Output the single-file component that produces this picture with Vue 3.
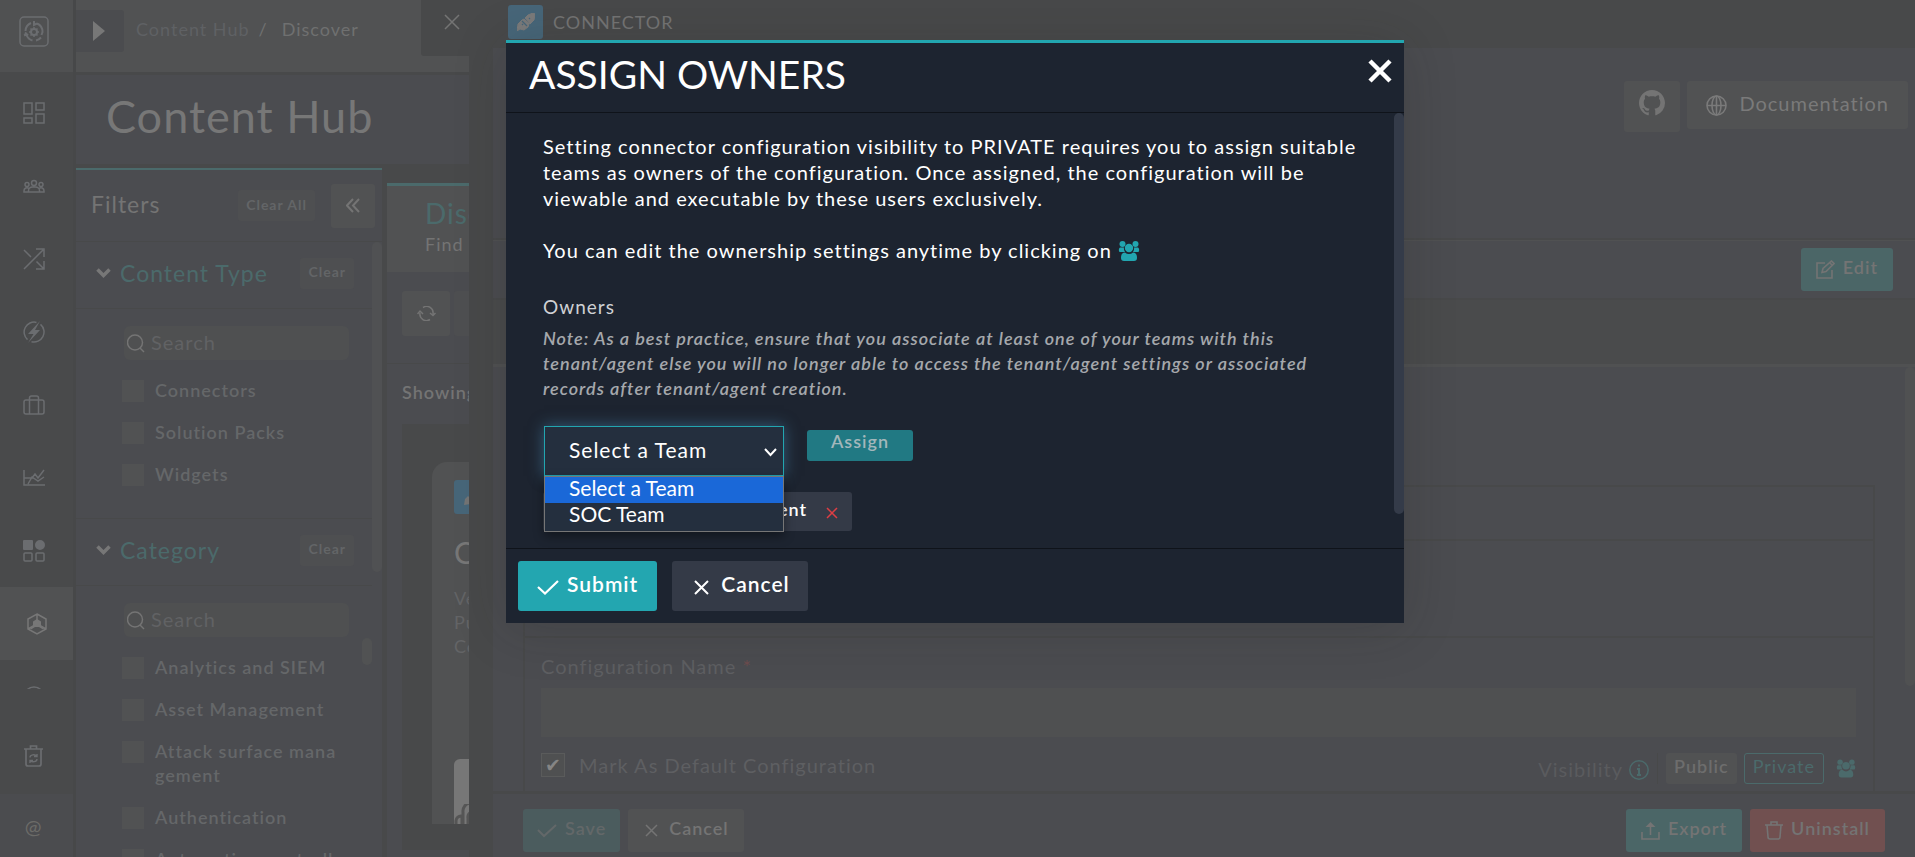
<script setup>
import { ref } from 'vue'

const navItems = [
  { name: 'Dashboard', stroke: 'M1 1h8v11H1zM13 1h8v7h-8zM1 16h8v5H1zM13 12h8v9h-8z' },
  { name: 'Teams', stroke: 'M8.5 8a2.5 2.5 0 1 0 5 0a2.5 2.5 0 1 0-5 0M2 9.500a2 2 0 1 0 4 0a2 2 0 1 0-4 0M16 9.500a2 2 0 1 0 4 0a2 2 0 1 0-4 0M5.500 17v-1.500a4 3.500 0 0 1 4-3.500h3a4 3.500 0 0 1 4 3.500v1.500zM5.500 17H1v-1a3 3 0 0 1 5-2.500M16.500 17H21v-1a3 3 0 0 0-5-2.500' },
  { name: 'Playbooks', stroke: 'M1 21L20 2M13 1h8v8M1 2l7 7M13.500 13.500l7 7M21 13v8h-8' },
  { name: 'Automation', stroke: 'M13.500 1.400A10 10 0 0 0 4.500 18.600M17.500 3.400A10 10 0 0 1 8.500 20.700', fill: 'M17 0L5 13h5.500L5 22l12-13h-5z' },
  { name: 'Resources', stroke: 'M3 6h16a2 2 0 0 1 2 2v10a2 2 0 0 1-2 2H3a2 2 0 0 1-2-2V8a2 2 0 0 1 2-2zM6.500 20V4a2 2 0 0 1 2-2h5a2 2 0 0 1 2 2v16' },
  { name: 'Reports', stroke: 'M1 3v15h21M1 11h8l3-4 3 4 6-8M5 17l4-7 6 4 6-4' },
  { name: 'Widgets', stroke: 'M2 13h6a1 1 0 0 1 1 1v6a1 1 0 0 1-1 1H2a1 1 0 0 1-1-1v-6a1 1 0 0 1 1-1zM14 13h6a1 1 0 0 1 1 1v6a1 1 0 0 1-1 1h-6a1 1 0 0 1-1-1v-6a1 1 0 0 1 1-1z', fill: 'M1 0h8a1 1 0 0 1 1 1v8a1 1 0 0 1-1 1H1a1 1 0 0 1-1-1V1a1 1 0 0 1 1-1zM12 5a5 5 0 1 0 10 0a5 5 0 1 0-10 0' },
  { name: 'Content Hub', active: true, stroke: 'M11 1l9 5v10l-9 5-9-5V6zM11 1v8M2 16l7-4M20 16l-7-4', fill: 'M11 6l4 2.500v5L18 15l-1 1.500-4-2.500h-4L5 16.500 4 15l3-1.500v-5z' },
  { name: 'Help', stroke: 'M1 11a10 10 0 1 0 20 0a10 10 0 1 0-20 0M7 8a4 4 0 0 1 8 0c0 3-4 3-4 6' },
]

const sections = [
  { title: 'Content Type', items: ['Connectors', 'Solution Packs', 'Widgets'] },
  {
    title: 'Category',
    scroll: true,
    items: ['Analytics and SIEM', 'Asset Management', 'Attack surface management', 'Authentication', 'Automation controllers'],
  },
]

const teams = ['Select a Team', 'SOC Team']
const team = ref('Select a Team')
const isDefault = ref(true)
</script>

<template>
  <div class="app">
    <nav class="sidebar" aria-label="Main">
      <a href="#" class="logo" aria-label="Home">
        <svg width="30" height="31" viewBox="0 0 30 31" fill="none" stroke="currentColor">
          <rect x="1" y="1" width="28" height="29" rx="4" stroke-width="1.500" />
          <path d="M12 7a9 9 0 0 0-5.500 8M15 5v4l3-1.500M18 7.500a9 9 0 0 1 5.500 8.500l-1 3M6 16.500l3 3M7.500 19a9 9 0 0 0 6 5.500M17 24.500a9 9 0 0 0 5-3M6.500 20l-1-2" stroke-width="2" />
          <circle cx="15" cy="16" r="3" stroke-width="2" />
          <path d="M15 11v2M15 19v2M10 16h2M18 16h2M11.500 12.500l1.500 1.500M17 18l1.500 1.500M18.500 12.500L17 14M13 18l-1.500 1.500" stroke-width="1.500" />
        </svg>
      </a>
      <div class="nav-list">
        <a v-for="item in navItems" :key="item.name" href="#" class="nav-item" :class="{ active: item.active }" :aria-label="item.name">
          <svg width="22" height="22" viewBox="0 0 22 22">
            <path :d="item.stroke" fill="none" stroke="currentColor" stroke-width="1.500" />
            <path v-if="item.fill" :d="item.fill" fill="currentColor" />
          </svg>
        </a>
      </div>
      <a href="#" class="nav-bin" aria-label="Recycle bin">
        <svg width="19" height="22" viewBox="0 0 19 22" fill="none" stroke="currentColor" stroke-width="1.700">
          <path d="M0 4h19M2 4v15a2 2 0 0 0 2 2h11a2 2 0 0 0 2-2V4M6.500 4V1h6v3" />
          <path d="M6 12.500c0-3 5-3.500 6.500-1.500M13 9v2.500h-3M13 14c0 3-5 3.500-6.500 1.500M6 18v-2.500h3" stroke-width="1.400" />
        </svg>
      </a>
      <a href="#" class="nav-at">@</a>
    </nav>

    <main class="hub">
      <header class="hub-bar">
        <button class="expand" aria-label="Expand menu">
          <svg width="12" height="20" viewBox="0 0 12 20"><path d="M0 0l12 10L0 20z" fill="currentColor" /></svg>
        </button>
        <div class="crumbs"><a href="#">Content Hub</a><span>/</span><span class="here">Discover</span></div>
        <button class="hub-close" aria-label="Close panel">
          <svg width="16" height="16" viewBox="0 0 16 16" stroke="currentColor" stroke-width="1.500"><path d="M1 1l14 14M15 1L1 15" /></svg>
        </button>
      </header>
      <h1 class="hub-title">Content Hub</h1>
      <div class="hub-body">
        <aside class="filters">
          <div class="filters-head">
            <h2>Filters</h2>
            <button class="mini">Clear All</button>
            <button class="collapse" aria-label="Collapse filters">
              <svg width="14" height="15" viewBox="0 0 14 15" fill="none" stroke="currentColor" stroke-width="2"><path d="M7 1L1 7.500 7 14M13 1L7 7.500 13 14" /></svg>
            </button>
          </div>
          <div class="filters-scroll">
            <div class="sections">
              <section v-for="s in sections" :key="s.title" class="section">
                <div class="section-head">
                  <svg width="15" height="10" viewBox="0 0 15 10" fill="none" stroke="currentColor" stroke-width="3.500"><path d="M1.500 1.500l6 6 6-6" /></svg>
                  <h3>{{ s.title }}</h3>
                  <button class="mini">Clear</button>
                </div>
                <div class="section-body">
                  <div class="section-main">
                    <label class="search">
                      <svg width="18" height="19" viewBox="0 0 18 19" fill="none" stroke="currentColor" stroke-width="1.500"><circle cx="8" cy="8.500" r="7.500" /><path d="M13 14l4 4" /></svg>
                      <input type="text" placeholder="Search" :aria-label="'Search ' + s.title" />
                    </label>
                    <label v-for="i in s.items" :key="i" class="check"><input type="checkbox" /><span>{{ i }}</span></label>
                  </div>
                  <i v-if="s.scroll" class="inner-thumb"></i>
                </div>
              </section>
            </div>
            <i class="filters-thumb"></i>
          </div>
        </aside>

        <section class="results">
          <div class="tab"><strong>Discover</strong><span>Find Content</span></div>
          <div class="tools">
            <button aria-label="Refresh">
              <svg width="19" height="15" viewBox="0 0 19 15" fill="none" stroke="currentColor" stroke-width="1.500"><path d="M6 1.500A6.500 6.500 0 0 1 16 8M13 7l3 2.500L18.500 7M13 13.500A6.500 6.500 0 0 1 3 7M.500 8L3 5l3 3" /></svg>
            </button>
            <button class="faint" aria-label="Sort"></button>
          </div>
          <div class="showing">Showing</div>
          <div class="grid">
            <article class="card">
              <span class="card-icon">
                <svg width="18" height="18" viewBox="0 0 18 18" fill="currentColor"><path d="M1 17l1-6 3-3 5 5-3 3zM6 7l4-4 6-2 1 1-2 6-4 4z" /></svg>
              </span>
              <h4>C</h4>
              <p>Ve<br />Pu<br />Co</p>
              <div class="thumb">
                <svg width="56" height="20" viewBox="0 0 56 20" fill="none" stroke="currentColor" stroke-width="3"><path d="M2 20v-3a5 5 0 0 1 6-5v8M9 20V8a8 8 0 0 1 16-2M14 20v-6a5 5 0 0 1 10-2" /></svg>
              </div>
            </article>
          </div>
        </section>
      </div>
    </main>

    <section class="drawer">
      <header class="drawer-bar">
        <span class="conn-icon">
          <svg width="18" height="18" viewBox="0 0 18 18">
            <path d="M0 18l1-7 4-4 2-1 5 5-1 3-4 3-4-1zM8 5l3-3 5-2 2 1-1 6-4 4z" fill="currentColor" stroke="currentColor" stroke-linejoin="round" />
            <path d="M5 8l5 5M5 11l1 1M12 5l1 1" stroke="#476679" stroke-width="1.200" fill="none" />
          </svg>
        </span>
        <span>CONNECTOR</span>
      </header>
      <div class="drawer-body">
        <div class="drawer-top">
          <button class="btn github" aria-label="GitHub">
            <svg width="26" height="26" viewBox="0 0 16 16" fill="currentColor"><path d="M8 0C3.580 0 0 3.580 0 8c0 3.540 2.290 6.530 5.470 7.590.4.070.55-.17.55-.38 0-.19-.01-.82-.01-1.490-2.010.37-2.530-.49-2.690-.94-.09-.23-.48-.94-.82-1.130-.28-.15-.68-.52-.01-.53.63-.01 1.080.58 1.230.82.72 1.210 1.870.87 2.330.66.07-.52.28-.87.51-1.070-1.780-.2-3.640-.89-3.640-3.950 0-.87.31-1.590.82-2.150-.08-.2-.36-1.020.08-2.120 0 0 .67-.21 2.200.82.64-.18 1.320-.27 2-.27s1.360.09 2 .27c1.530-1.040 2.200-.82 2.200-.82.44 1.100.16 1.920.08 2.120.51.56.82 1.270.82 2.150 0 3.070-1.870 3.750-3.650 3.950.29.25.54.73.54 1.480 0 1.070-.01 1.930-.01 2.200 0 .21.15.46.55.38A8.010 8.010 0 0 0 16 8c0-4.420-3.580-8-8-8z" /></svg>
          </button>
          <button class="btn docs">
            <svg width="21" height="21" viewBox="0 0 21 21" fill="none" stroke="currentColor" stroke-width="1.600"><circle cx="10.500" cy="10.500" r="9.500" /><ellipse cx="10.500" cy="10.500" rx="4.500" ry="9.500" /><path d="M10.500 1v19M1 10.500h19" /></svg>
            <span>Documentation</span>
          </button>
        </div>
        <div class="drawer-edit">
          <button class="btn teal">
            <svg width="19" height="19" viewBox="0 0 19 19" fill="none" stroke="currentColor" stroke-width="1.600"><path d="M9 3H1v15h15v-8" /><path d="M6 12.500l1-4L15.500 1l2.500 2.500L10 11.500zM14 3l2 2" /></svg>
            <span>Edit</span>
          </button>
        </div>
        <div class="band"></div>
        <div class="drawer-scroll">
          <form class="config" @submit.prevent>
            <div class="row-a"></div>
            <div class="row-b"></div>
            <div class="fields">
              <label class="field-label" for="cfg-name">Configuration Name <em>*</em></label>
              <input id="cfg-name" class="field" type="text" />
              <div class="opts">
                <label class="default"><input v-model="isDefault" type="checkbox" /><span>Mark As Default Configuration</span></label>
                <div class="visibility">
                  <span class="vis-label">Visibility</span>
                  <svg class="info" width="20" height="20" viewBox="0 0 20 20" fill="none" stroke="currentColor"><circle cx="10" cy="10" r="9.200" stroke-width="1.500" /><path d="M10 4.500v2M8 9h2v6M8 15h4" stroke-width="2" /></svg>
                  <i class="sep"></i>
                  <button type="button" class="vis">Public</button>
                  <button type="button" class="vis on">Private</button>
                  <svg class="team" width="20" height="19" viewBox="0 0 22 20" fill="currentColor"><circle cx="4.500" cy="3" r="3" /><circle cx="17.500" cy="3" r="3" /><circle cx="11" cy="7" r="4.200" /><path d="M2 6.500h4a6 6 0 0 0 1 4.500H1.500A1.500 2.500 0 0 1 2 6.500zM20 6.500h-4a6 6 0 0 1-1 4.500h5.500A1.500 2.500 0 0 0 20 6.500zM7 11.500a6 6 0 0 0 8 0c3 0 4 2.500 4 5.500 0 2-1 3-3 3H6c-2 0-3-1-3-3 0-3 1-5.500 4-5.500z" /></svg>
                </div>
              </div>
            </div>
          </form>
          <i class="drawer-thumb"></i>
        </div>
        <footer class="drawer-foot">
          <button class="btn save">
            <svg width="20" height="14" viewBox="0 0 20 14" fill="none" stroke="currentColor" stroke-width="2"><path d="M1 6l6 6L19 1" /></svg>
            <span>Save</span>
          </button>
          <button class="btn plain">
            <svg width="13" height="13" viewBox="0 0 13 13" stroke="currentColor" stroke-width="1.500"><path d="M1 1l11 11M12 1L1 12" /></svg>
            <span>Cancel</span>
          </button>
          <button class="btn export">
            <svg width="19" height="19" viewBox="0 0 19 19" fill="none" stroke="currentColor" stroke-width="1.600"><path d="M1 11v7h17v-7M9.500 14V3" /><path d="M4.500 6l5-5 5 5z" fill="currentColor" stroke="none" /></svg>
            <span>Export</span>
          </button>
          <button class="btn remove">
            <svg width="18" height="19" viewBox="0 0 18 19" fill="none" stroke="currentColor" stroke-width="1.600"><path d="M0 4h18M2 4l1 12a2 2 0 0 0 2 2h8a2 2 0 0 0 2-2l1-12M6 4V1h6v3" /></svg>
            <span>Uninstall</span>
          </button>
        </footer>
      </div>
    </section>

    <div class="overlay">
      <div class="modal" role="dialog" aria-modal="true" aria-labelledby="modal-title">
        <header class="modal-head">
          <h2 id="modal-title">ASSIGN OWNERS</h2>
          <button class="modal-close" aria-label="Close">
            <svg width="24" height="24" viewBox="0 0 24 24" stroke="currentColor" stroke-width="4.500"><path d="M2 2l20 20M22 2L2 22" /></svg>
          </button>
        </header>
        <div class="modal-body">
          <div class="modal-content">
            <p>Setting connector configuration visibility to PRIVATE requires you to assign suitable teams as owners of the configuration. Once assigned, the configuration will be viewable and executable by these users exclusively.</p>
            <p class="second">
              You can edit the ownership settings anytime by clicking on
              <svg class="team" width="22" height="20" viewBox="0 0 22 20" fill="currentColor"><circle cx="4.500" cy="3" r="3" /><circle cx="17.500" cy="3" r="3" /><circle cx="11" cy="7" r="4.200" /><path d="M2 6.500h4a6 6 0 0 0 1 4.500H1.500A1.500 2.500 0 0 1 2 6.500zM20 6.500h-4a6 6 0 0 1-1 4.500h5.500A1.500 2.500 0 0 0 20 6.500zM7 11.500a6 6 0 0 0 8 0c3 0 4 2.500 4 5.500 0 2-1 3-3 3H6c-2 0-3-1-3-3 0-3 1-5.500 4-5.500z" /></svg>
            </p>
            <label class="owners" for="team">Owners</label>
            <p class="note">Note: As a best practice, ensure that you associate at least one of your teams with this tenant/agent else you will no longer able to access the tenant/agent settings or associated records after tenant/agent creation.</p>
            <div class="assign-row">
              <div class="picker">
                <select id="team" v-model="team"><option v-for="t in teams" :key="t">{{ t }}</option></select>
                <svg class="caret" width="13" height="9" viewBox="0 0 13 9" fill="none" stroke="currentColor" stroke-width="2"><path d="M1 1l5.500 6L12 1" /></svg>
                <ul class="menu" role="listbox" aria-label="Teams">
                  <li v-for="t in teams" :key="t" role="option" :class="{ on: t === team }" :aria-selected="t === team">{{ t }}</li>
                </ul>
              </div>
              <button class="assign">Assign</button>
            </div>
            <div class="chip">
              <span>Agent</span>
              <button aria-label="Remove team">
                <svg width="12" height="12" viewBox="0 0 12 12" stroke="currentColor" stroke-width="1.500"><path d="M1 1l10 10M11 1L1 11" /></svg>
              </button>
            </div>
          </div>
          <i class="modal-thumb"></i>
        </div>
        <footer class="modal-foot">
          <button class="mbtn submit">
            <svg width="22" height="15" viewBox="0 0 22 15" fill="none" stroke="currentColor" stroke-width="2.200"><path d="M1 7l7 6.500L21 1" /></svg>
            <span>Submit</span>
          </button>
          <button class="mbtn cancel">
            <svg width="15" height="15" viewBox="0 0 15 15" stroke="currentColor" stroke-width="2"><path d="M1 1l13 13M14 1L1 14" /></svg>
            <span>Cancel</span>
          </button>
        </footer>
      </div>
    </div>
  </div>
</template>

<style>
body { margin: 0; background: #48494a; }
</style>

<style scoped>
* { box-sizing: border-box; }
.app {
  display: flex;
  height: 100vh;
  overflow: hidden;
  position: relative;
  font-family: Lato, "Liberation Sans", sans-serif;
  font-size: 18px;
  line-height: 24px;
  letter-spacing: 1px;
  color: #747474;
  background: #48494a;
}
h1, h2, h3, h4, p, ul { margin: 0; padding: 0; font-weight: 400; }
button, input, select { font: inherit; letter-spacing: inherit; color: inherit; border: 0; margin: 0; padding: 0; background: none; }
a { color: inherit; text-decoration: none; }
svg { display: block; flex: none; }
i { display: block; }

.sidebar { flex: none; width: 76px; display: flex; flex-direction: column; border-right: 3px solid #474849; background: #494a4b; color: #6b6d70; }
.logo { height: 72px; flex: none; margin-bottom: 4px; background: #505152; display: flex; align-items: center; padding: 0 0 9px 19px; }
.nav-list { flex: 1; min-height: 0; overflow: hidden; }
.nav-item { height: 73px; padding-right: 6px; display: flex; align-items: center; justify-content: center; }
.nav-item.active { background: #515253; padding-right: 0; color: #777; }
.nav-bin { flex: none; height: 105px; padding: 56px 6px 0 0; display: flex; justify-content: center; align-items: flex-start; }
.nav-at { flex: none; height: 63px; background: #4b4c4f; display: flex; align-items: center; justify-content: center; padding: 0 6px 0 0; color: #6b6b68; font-size: 20px; }

.hub { flex: none; width: 393px; overflow: hidden; display: flex; flex-direction: column; }
.hub-bar { flex: none; height: 72px; margin-bottom: 3px; background: #515253; display: flex; align-items: flex-start; white-space: nowrap; }
.expand { width: 48px; height: 42px; margin-top: 10px; border-radius: 0 3px 3px 0; background: #4b4c4f; display: flex; align-items: center; padding-left: 17px; color: #777; }
.crumbs { flex: 1; display: flex; padding: 17px 0 0 12px; color: #6f7070; font-size: 18px; }
.crumbs a { color: #5f6164; }
.crumbs span { margin-left: 9px; }
.crumbs .here { margin-left: 14px; }
.hub-close { width: 48px; height: 56px; background: #48494a; border-radius: 0 0 0 3px; display: flex; justify-content: center; padding: 14px 0 0 14px; }
.hub-title { flex: none; height: 89px; background: #4b4c50; padding: 13px 0 0 30px; font-size: 45px; line-height: 56px; color: #777; }
.hub-body { flex: 1; min-height: 0; display: flex; }
.filters { flex: none; width: 306px; margin-top: 4px; border-top: 2px solid #4b6a6b; background: #4b4c50; display: flex; flex-direction: column; }
.filters-head { flex: none; height: 72px; border-bottom: 1px solid #48494a; display: flex; align-items: center; padding: 0 7px 0 15px; }
.filters-head h2 { flex: 1; font-size: 23px; padding-bottom: 3px; color: #747474; }
.mini { flex: none; font-size: 14px; font-weight: 700; line-height: 20px; height: 31px; padding: 0 8px 2px; border-radius: 3px; background: #4e4f51; color: #636567; }
.collapse { width: 44px; height: 44px; margin-left: 16px; border-radius: 3px; background: #515253; display: flex; align-items: center; justify-content: center; }
.filters-scroll { flex: 1; min-height: 0; display: flex; overflow: hidden; }
.sections { flex: 1; min-width: 0; }
.filters-thumb { flex: none; width: 10px; height: 330px; border-radius: 5px; background: #505153; }
.section-head { height: 67px; border-bottom: 1px solid #48494a; display: flex; align-items: center; gap: 9px; padding: 0 18px 4px 20px; color: #777; }
.section-head h3 { flex: 1; font-size: 23px; color: #4b6a6b; }
.section-body { display: flex; border-bottom: 1px solid #48494a; }
.section-main { flex: 1; min-width: 0; display: flex; flex-direction: column; gap: 18px; padding: 17px 0 32px 46px; }
.search { display: flex; align-items: center; gap: 6px; height: 34px; margin: 0 23px 0 2px; padding-left: 3px; border-radius: 6px; background: #4f5051; color: #747474; }
.search input { flex: 1; min-width: 0; font-size: 20px; outline: none; padding-bottom: 3px; }
.search input::placeholder { color: #616264; opacity: 1; }
.check { display: flex; align-items: flex-start; gap: 11px; color: #656769; font-weight: 600; word-break: break-all; padding-right: 30px; font-size: 18px; }
.check input { appearance: none; flex: none; width: 22px; height: 22px; margin-top: 2px; background: #515253; }
.inner-thumb { flex: none; width: 10px; height: 27px; margin: 52px 0 0 -10px; border-radius: 5px; background: #515253; }

.results { flex: 1; min-width: 0; margin: 19px 0 0 5px; overflow: hidden; background: #4b4c50; white-space: nowrap; }
.tab { height: 89px; border-top: 3px solid #4b6a6b; background: #515253; padding: 11px 0 0 38px; display: flex; flex-direction: column; gap: 3px; font-size: 18px; }
.tab strong { font-size: 28px; line-height: 32px; font-weight: 400; color: #4b6a6b; }
.tools { height: 92px; border-bottom: 1px solid #48494a; padding: 19px 0 0 15px; display: flex; gap: 4px; }
.tools button { flex: none; width: 48px; height: 45px; border-radius: 3px; background: #515253; display: flex; align-items: center; justify-content: center; }
.tools .faint { background: #4e4f51; }
.showing { height: 60px; padding: 16px 0 0 15px; font-size: 18px; font-weight: 600; }
.grid { height: 426px; margin-left: 15px; padding: 38px 0 0 30px; background: #48494a; }
.card { width: 360px; height: 362px; overflow: hidden; border-radius: 15px 15px 0 0; background: #515253; padding: 18px 22px 0; }
.card-icon { display: flex; align-items: center; justify-content: center; width: 35px; height: 34px; border-radius: 3px; background: #476679; }
.card h4 { font-size: 30px; line-height: 40px; margin-top: 18px; color: #777; }
.card p { margin-top: 14px; color: #636466; }
.thumb { width: 120px; height: 65px; margin-top: 101px; border-radius: 6px 6px 0 0; background: #777; color: #555; display: flex; align-items: flex-end; }

.drawer { flex: 1; min-width: 0; display: flex; flex-direction: column; padding-left: 24px; }
.drawer-bar { flex: none; height: 48px; display: flex; align-items: center; gap: 10px; padding: 0 0 4px 15px; }
.conn-icon { width: 35px; height: 34px; border-radius: 3px; background: #476679; display: flex; align-items: center; justify-content: center; color: #7b7b7b; }
.drawer-body { flex: 1; min-height: 0; background: #4b4c50; display: flex; flex-direction: column; }
.drawer-top { flex: none; height: 192px; border-bottom: 2px solid #48494a; display: flex; justify-content: flex-end; align-items: flex-start; gap: 7px; padding: 33px 7px 0 0; font-size: 20px; }
.btn { flex: none; display: flex; align-items: center; justify-content: center; gap: 8px; height: 43px; border-radius: 3px; padding: 0 15px; background: #515253; color: #747474; font-weight: 600; font-size: 18px; }
.btn span { padding-bottom: 5px; }
.github { width: 56px; height: 51px; padding: 0 0 7px; }
.docs { height: 48px; padding: 0 19px; gap: 12px; font-size: 20px; font-weight: 400; color: #7a7a7a; }
.drawer-edit { flex: none; height: 58px; border-top: 1px solid #505152; display: flex; justify-content: flex-end; padding: 7px 22px 0 0; }
.teal { background: #4b6667; }
.band { flex: none; height: 69px; background: #4a4b4c; border-bottom: 3px solid #505152; border-top: 2px solid #48494a; }
.drawer-scroll { flex: 1; min-height: 0; display: flex; overflow: hidden; border-bottom: 3px solid #48494a; }
.config { flex: 1; margin: 118px 30px 0; border: 2px solid #48494a; border-bottom: 0; }
.row-a { height: 54px; border-bottom: 2px solid #48494a; }
.row-b { height: 97px; border-bottom: 2px solid #48494a; }
.fields { padding: 16px 17px 0 16px; }
.field-label { display: block; font-size: 20px; color: #5e5f62; }
.field-label em { color: #6d4c4e; font-style: normal; }
.field { display: block; width: 100%; height: 49px; margin-top: 10px; background: #4f5051; }
.opts { display: flex; justify-content: space-between; align-items: flex-start; padding-top: 16px; }
.default { display: flex; align-items: center; gap: 14px; font-size: 20px; color: #5e5f62; }
.default input { appearance: none; width: 24px; height: 24px; border: 1px solid #5a5b5b; background: #4f5051; display: grid; place-items: center; }
.default input:checked::after { content: "✔"; font: 400 19px/20px "DejaVu Sans", sans-serif; color: #858585; letter-spacing: 0; }
.visibility { display: flex; align-items: center; font-size: 20px; }
.vis-label { color: #5a5b5e; }
.info { color: #4b6a6b; margin: 3px 8px 0 6px; }
.sep { width: 1px; height: 31px; background: #48494a; margin-right: 8px; }
.vis { height: 31px; padding: 0 8px 5px; border-radius: 3px; background: #515253; color: #6d6d6d; font-weight: 600; font-size: 18px; }
.vis.on { margin-left: 7px; background: none; border: 1px solid #4b6a6b; color: #4b6a6b; font-weight: 400; }
.visibility .team { color: #4b6a6b; margin-left: 12px; }
.drawer-thumb { flex: none; width: 10px; height: 319px; border-radius: 5px; background: #505152; }
.drawer-foot { flex: none; height: 63px; display: flex; padding: 15px 30px 0; gap: 8px; }
.save { padding: 0 14px; background: #4b5c5e; color: #636869; }
.plain { padding: 0 15px 0 17px; gap: 11px; }
.export { margin-left: auto; background: #4b6667; }
.remove { background: #715050; }

.overlay { position: absolute; inset: 0; display: flex; justify-content: center; align-items: flex-start; padding: 40px 5px 0 0; }
.modal { width: 898px; border-top: 3px solid #22a6b0; background: #1d2430; box-shadow: 0 5px 50px rgba(30, 30, 30, 0.2); color: #fff; }
.modal-head { height: 70px; border-bottom: 1px solid #0f131a; display: flex; justify-content: space-between; align-items: flex-start; padding: 7px 12px 0 23px; }
.modal-head h2 { font-size: 39px; line-height: 48px; letter-spacing: 0; }
.modal-close { margin-top: 9px; }
.modal-body { display: flex; }
.modal-content { flex: 1; padding: 20px 36px 17px 37px; font-size: 20px; line-height: 26px; }
.second { margin-top: 26px; }
.second .team { display: inline-block; vertical-align: -3px; color: #22a6b0; }
.owners { display: block; margin-top: 32px; line-height: 24px; font-size: 19px; color: #cfd1d4; }
.note { margin-top: 7px; padding-right: 20px; font-size: 18px; line-height: 25px; font-weight: 600; font-style: italic; color: #a5a8ac; }
.assign-row { display: flex; align-items: flex-start; gap: 23px; margin-top: 25px; padding-left: 1px; }
.picker { position: relative; width: 240px; }
.picker select { appearance: none; display: block; width: 100%; height: 50px; padding: 0 24px 3px; border: 1px solid #22a6b0; background: #242f3e; color: #fff; font-size: 21px; outline: none; box-shadow: 0 0 14px rgba(70, 130, 170, 0.6); }
.caret { position: absolute; right: 7px; top: 22px; }
.menu { position: absolute; z-index: 2; top: 50px; left: 0; right: 0; list-style: none; padding-bottom: 2px; border: 1px solid #767676; background: #242f3e; box-shadow: 0 4px 10px rgba(0, 0, 0, 0.4); font-size: 21px; letter-spacing: 0; line-height: 22px; }
.menu li { padding: 0 0 4px 24px; }
.menu .on { background: #1a68d8; }
.assign { height: 31px; margin-top: 4px; padding: 0 24px 8px; border-radius: 3px; background: #217983; color: #a3b7bb; font-size: 18px; line-height: 23px; font-weight: 600; }
.chip { display: flex; align-items: center; justify-content: flex-end; gap: 19px; width: 309px; height: 39px; margin-top: 16px; padding: 0 14px 0 0; border-radius: 3px; background: #343a47; font-size: 18px; font-weight: 600; }
.chip span { padding-bottom: 5px; }
.chip button { color: #dc3e44; padding-top: 3px; }
.modal-thumb { flex: none; width: 10px; height: 401px; border-radius: 5px; background: #343b49; }
.modal-foot { height: 75px; border-top: 1px solid #0f131a; display: flex; gap: 15px; padding: 12px; }
.mbtn { display: flex; align-items: center; height: 50px; border-radius: 3px; padding: 0 19px; gap: 8px; font-size: 21px; font-weight: 600; }
.mbtn svg { margin-top: 3px; }
.mbtn span { padding-bottom: 4px; }
.submit { background: #23a6b0; }
.cancel { background: #343a47; padding: 0 18px 0 22px; gap: 12px; }
</style>
